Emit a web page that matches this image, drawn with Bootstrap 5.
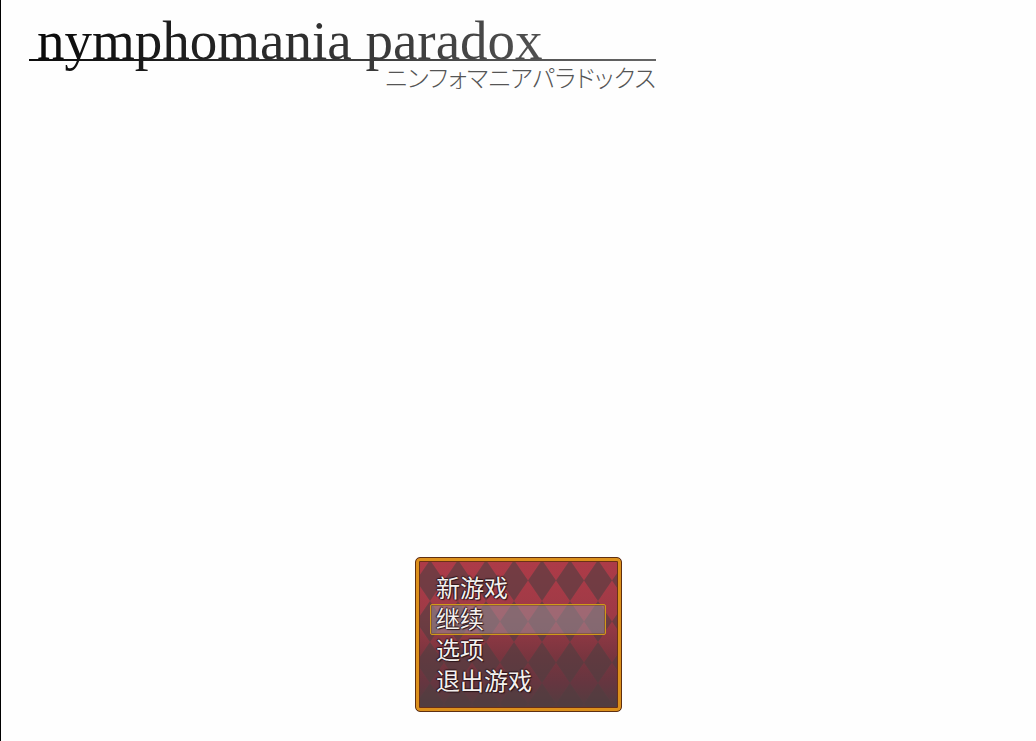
<!DOCTYPE html>
<html lang="zh-CN">
<head>
<meta charset="utf-8">
<meta name="viewport" content="width=device-width, initial-scale=1">
<title>nymphomania paradox</title>
<link href="https://cdn.jsdelivr.net/npm/bootstrap@5.3.0/dist/css/bootstrap.min.css" rel="stylesheet">
<style>
  body { background: #fefefe; border-left: 1px solid #000; }
  .title-block { max-width: 655px; padding: 10px 0 0 28px; }
  .game-title {
    margin: 0; padding-left: 8px; border-bottom: 2px solid;
    border-image: linear-gradient(90deg, #0c0c0c, #666) 1;
    height: 51px; font: 400 55px/62px "Liberation Serif", serif; white-space: nowrap;
  }
  .ink {
    display: inline-block;
    background: linear-gradient(90deg, #0a0a0a, #505050);
    -webkit-background-clip: text; background-clip: text; color: transparent;
  }
  .subtitle {
    margin: 0; color: #555; font: 300 24px/32px "Noto Sans CJK JP", sans-serif;
    font-feature-settings: "palt"; text-align: right; white-space: nowrap;
  }
  .title-menu {
    width: 207px; margin-bottom: 29px; padding: 11px 11px 10px 10px;
    border: 1px solid #5e2f12; border-radius: 5px;
    box-shadow: inset 0 0 0 3px #dc901c, inset 0 0 0 4px #6a3018;
    background:
      url("data:image/svg+xml,%3Csvg xmlns='http://www.w3.org/2000/svg' width='28' height='41'%3E%3Cpath d='M14 0L28 20.500L14 41L0 20.500Z' fill='%23503e40' fill-opacity='.62'/%3E%3C/svg%3E") 0 2px,
      linear-gradient(#ae3b48, #9e3a46 38%, #78353f 65%, #653640 82%, #553c40 95%);
  }
  .menu-item {
    height: 31px; padding: 0 4px 4px 5px; border: 1px solid transparent; border-radius: 2px;
    background: none; color: #f4f0ee; text-align: left;
    font: 400 24px/25px "Noto Sans CJK SC", sans-serif;
    text-shadow: 1px 1px 1px #2b1418, -1px 0 1px #2b1418, 0 -1px 1px #2b1418;
  }
  .menu-item.active {
    border-color: #d09a18; background: rgba(160, 150, 160, .5) padding-box;
    box-shadow: inset 0 0 0 1px rgba(120, 70, 35, .5);
  }
</style>
</head>
<body class="min-vh-100 d-flex flex-column justify-content-between">
  <header class="title-block w-100">
    <h1 class="game-title"><span class="ink">nymphomania paradox</span></h1>
    <p class="subtitle" lang="ja">ニンフォマニアパラドックス</p>
  </header>
  <nav class="title-menu mx-auto" aria-label="主菜单">
    <div class="d-flex flex-column p-1">
      <button type="button" class="menu-item">新游戏</button>
      <button type="button" class="menu-item active">继续</button>
      <button type="button" class="menu-item">选项</button>
      <button type="button" class="menu-item">退出游戏</button>
    </div>
  </nav>
  <script src="https://cdn.jsdelivr.net/npm/bootstrap@5.3.0/dist/js/bootstrap.bundle.min.js"></script>
</body>
</html>
